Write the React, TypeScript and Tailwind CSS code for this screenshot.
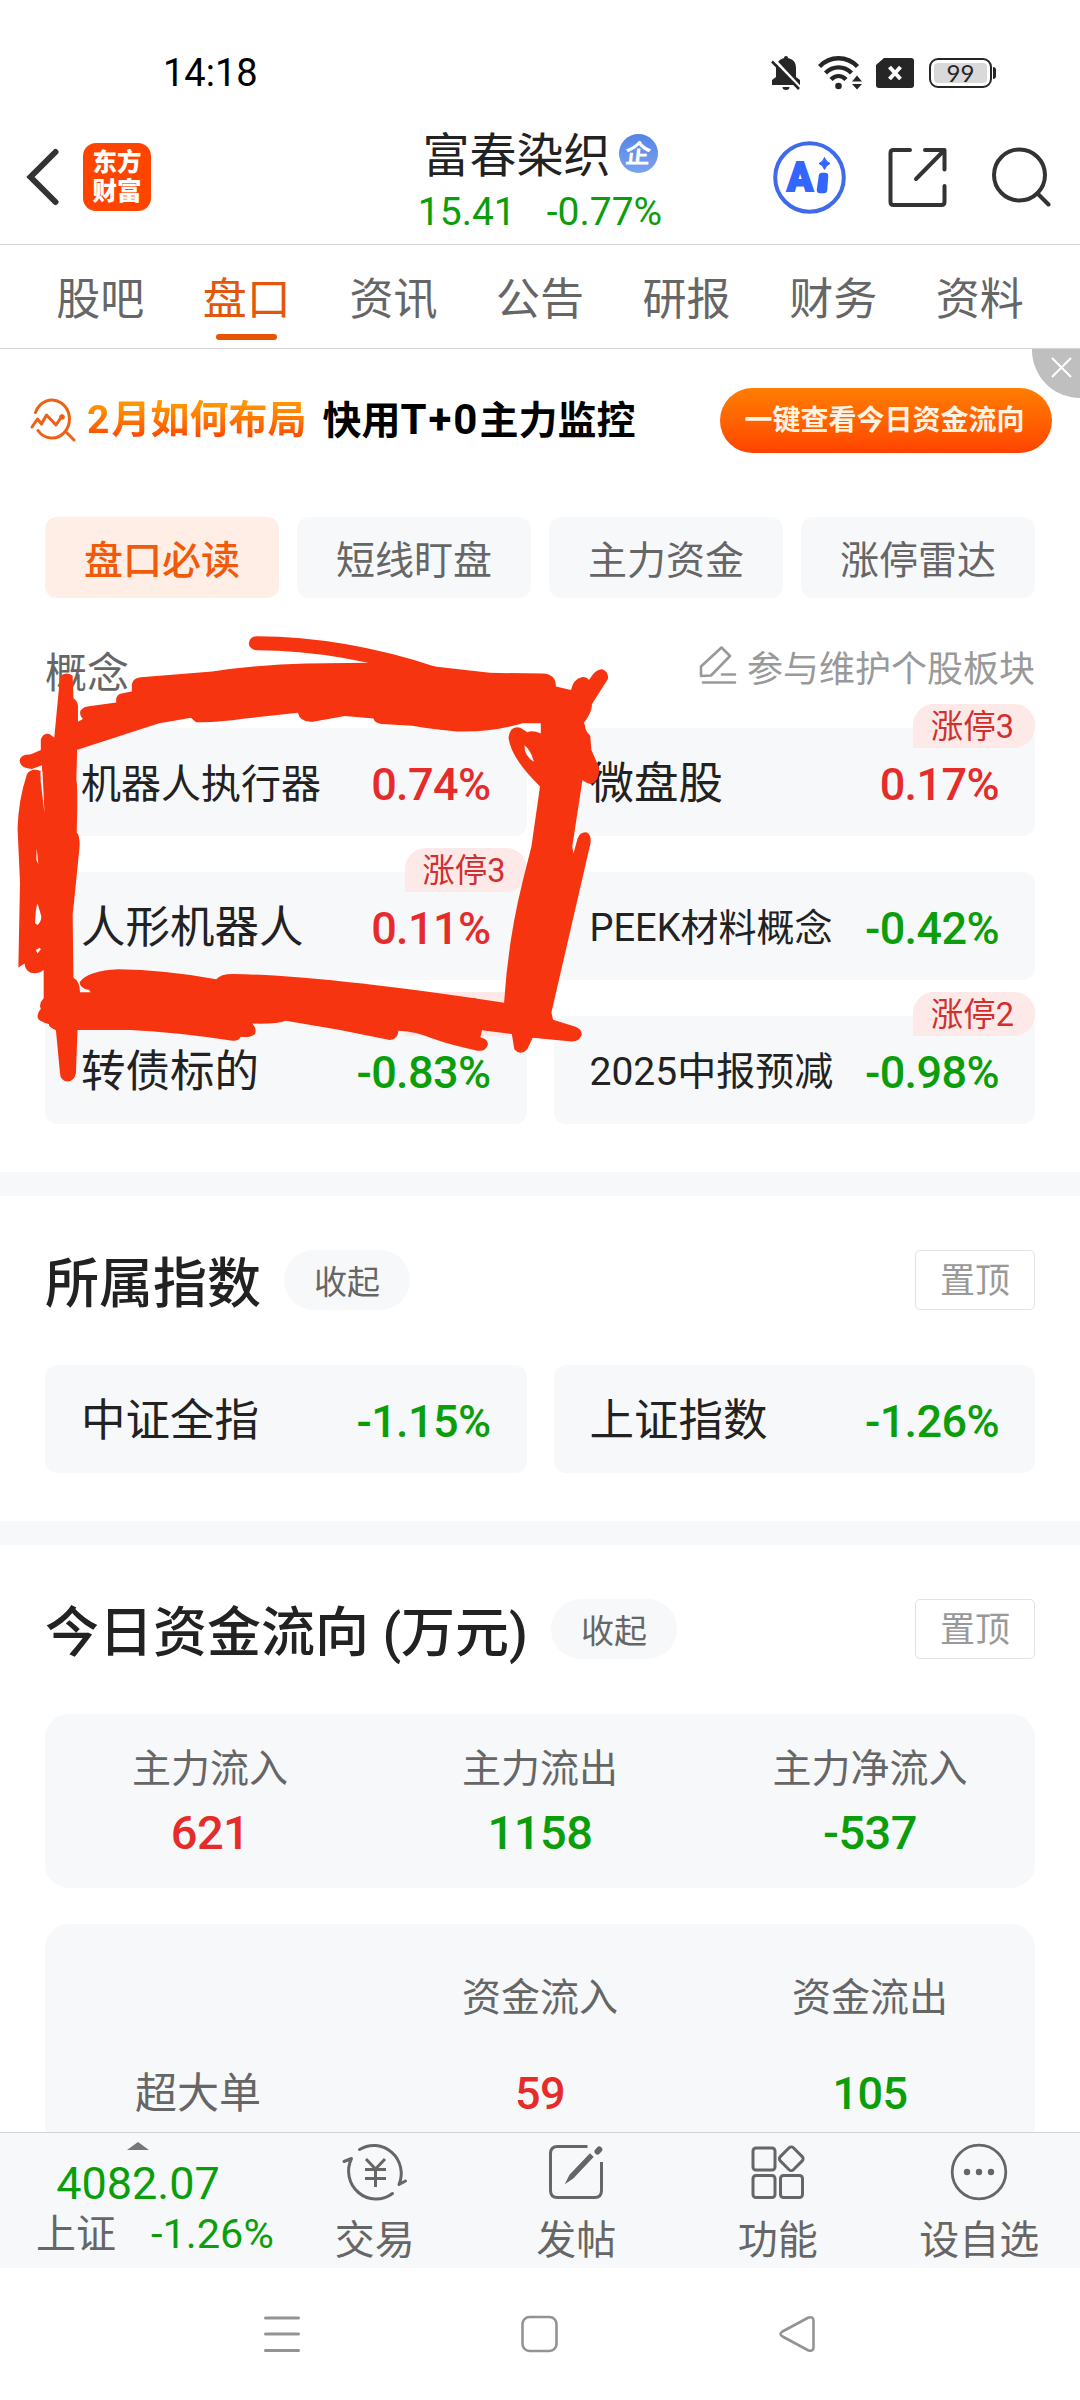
import React from 'react';
import clsx from 'clsx';

type Quote = { name: string; value: string; badge?: string; size?: string };

const UP = 'text-[#e62b2b]';
const DOWN = 'text-[#0a9e0a]';

const NAV_TABS = ['股吧', '盘口', '资讯', '公告', '研报', '财务', '资料'];
const SUB_TABS = ['盘口必读', '短线盯盘', '主力资金', '涨停雷达'];

const CONCEPTS: Quote[] = [
  { name: '机器人执行器', value: '0.74%', size: 'text-[40px]' },
  { name: '微盘股', value: '0.17%', badge: '涨停3' },
  { name: '人形机器人', value: '0.11%', badge: '涨停3' },
  { name: 'PEEK材料概念', value: '-0.42%', size: 'text-[38px]' },
  { name: '转债标的', value: '-0.83%', badge: '涨停1' },
  { name: '2025中报预减', value: '-0.98%', badge: '涨停2', size: 'text-[39px]' },
];

const INDEXES: Quote[] = [
  { name: '中证全指', value: '-1.15%' },
  { name: '上证指数', value: '-1.26%' },
];

const FLOWS = [
  { label: '主力流入', value: '621', color: UP },
  { label: '主力流出', value: '1158', color: DOWN },
  { label: '主力净流入', value: '-537', color: DOWN },
];

// --- STATUS BAR ---
const StatusBar = () => (
  <div className="flex h-[110px] shrink-0 items-center justify-between pt-[35px] pr-[84px] pl-[163px]">
    <span className="text-[38px] leading-none text-black">14:18</span>
    <div className="flex items-center text-[#262626]">
      <svg width="30" height="34" viewBox="0 0 30 34" fill="currentColor">
        <path d="M13 2a2 2 0 0 1 4 0c6 1.500 8 5 8 10v9l4 3v5H1v-5l4-3v-9c0-5 3-8.500 8-10z" />
        <path d="M11.500 31h7a3.500 3 0 0 1-7 0z" />
        <path d="M3 3.500l27 29" stroke="#fff" strokeWidth="3" />
        <path d="M1 5.500l27 27.500" stroke="currentColor" strokeWidth="2.600" />
      </svg>
      <svg className="ml-[17px]" width="45" height="34" viewBox="0 0 45 34" fill="none" stroke="currentColor" strokeWidth="4.400">
        <path d="M1.500 10.500C12-.5 29-.5 39.500 10.500M7.500 17c7.500-7.500 18.500-7.500 26 0M13 23.500c4.500-4.500 10.500-4.500 15 0" />
        <circle cx="20.500" cy="30" r="3.300" fill="currentColor" stroke="none" />
        <path d="M34 25.500l5-6 5 6zM34 28l5 5.500 5-5.500z" fill="currentColor" stroke="none" />
      </svg>
      <svg className="ml-[13px]" width="38" height="30" viewBox="0 0 38 30">
        <path d="M8 0h27a3 3 0 0 1 3 3v24a3 3 0 0 1-3 3H3a3 3 0 0 1-3-3V7z" fill="currentColor" />
        <path d="M13.500 9l11 12M24.500 9l-11 12" stroke="#fff" strokeWidth="4" />
      </svg>
      <div className="ml-[15px] flex h-[30px] w-[63px] items-center rounded-[9px] border-2 border-[#262626] p-[3px]">
        <div className="flex h-full w-full items-center justify-center rounded-[4px] bg-[#d9d9d9] font-['Lato'] text-[24px] leading-none text-[#262626]">
          99
        </div>
      </div>
      <div className="ml-[1px] h-[12px] w-[3px] rounded-r bg-[#262626]" />
    </div>
  </div>
);

// --- HEADER ---
const Header = () => (
  <header className="grid h-[135px] shrink-0 grid-cols-3 border-b border-[#d5d5d5]">
    <div className="flex items-center pl-[25px]">
      <svg width="35" height="58" viewBox="0 0 35 58" fill="none" stroke="#333" strokeWidth="6" strokeLinecap="round">
        <path d="M30.500 4L5.500 29l25 25" />
      </svg>
      <div className="ml-[23px] flex h-[68px] w-[68px] flex-col items-center justify-center rounded-[13px] bg-[#ff4400] text-[24.5px] leading-[29px] font-black text-white">
        <span>东方</span>
        <span>财富</span>
      </div>
    </div>
    <div className="flex flex-col items-center justify-center pt-[13px]">
      <div className="flex items-center leading-[56px]">
        <span className="text-[47px] text-[#222]">富春染织</span>
        <span className="-mt-1 ml-[8px] flex h-[39px] w-[39px] items-center justify-center rounded-full bg-gradient-to-b from-[#5484e6] to-[#7ba3ec] text-[26px] leading-none font-bold text-white">
          <span className="-skew-x-6">企</span>
        </span>
      </div>
      <div className={clsx('flex gap-[31px] text-[39px] leading-[56px]', DOWN)}>
        <span>15.41</span>
        <span>-0.77%</span>
      </div>
    </div>
    <div className="flex items-center justify-end pr-[29px]">
      <svg width="73" height="73" viewBox="0 0 73 73">
        <circle cx="36.500" cy="36.500" r="34.300" fill="none" stroke="#3f6bea" strokeWidth="4" />
        <g fill="#3366ff" stroke="#3366ff">
          <text x="14" y="50" fontSize="40" fontWeight="900" strokeWidth="2" fontFamily="Roboto" textLength="26" lengthAdjust="spacingAndGlyphs">A</text>
          <path d="M49 35h3l-1 14h-4z" strokeWidth="6.500" strokeLinejoin="round" />
          <path d="M51.500 16.500q1.500 4.500 5.500 6-4 1.500-5.500 6-1.500-4.500-5.500-6 4-1.500 5.500-6z" strokeWidth="1" />
        </g>
      </svg>
      <svg className="ml-[42px]" width="59" height="60" viewBox="0 0 59 60" fill="none" stroke="#333" strokeWidth="4" strokeLinecap="round" strokeLinejoin="round">
        <path d="M22 3H5.500Q2.500 3 2.500 6v49q0 3 3 3h48q3 0 3-3V39" />
        <path d="M37 3h19.500v19.500M56 3.500L28 32" />
      </svg>
      <svg className="ml-[44px]" width="60" height="62" viewBox="0 0 60 62" fill="none" stroke="#333" strokeWidth="4" strokeLinecap="round">
        <circle cx="28.500" cy="29" r="25.500" />
        <path d="M46.500 47.500L57.500 58.500" />
      </svg>
    </div>
  </header>
);

const NavTabs = () => (
  <nav className="flex h-[104px] shrink-0 border-b border-[#d5d5d5] px-[27px] pt-[26px]">
    {NAV_TABS.map((tab) => {
      const active = tab === '盘口';
      return (
        <div key={tab} className="flex flex-1 flex-col items-center">
          <span className={clsx('text-[44px] leading-[58px]', active ? 'text-[#e2570c]' : 'text-[#666]')}>{tab}</span>
          {active && <span className="mt-[5px] h-[6px] w-[61px] rounded-full bg-[#e85500]" />}
        </div>
      );
    })}
  </nav>
);

// --- PROMO BANNER ---
const Banner = () => (
  <div className="relative flex h-[142px] items-center pr-[28px] pl-[30px]">
    <svg width="46" height="44" viewBox="0 0 46 44" fill="none" stroke="#ef6014" strokeWidth="3" strokeLinecap="round">
      <path d="M5.500 14.500A17.500 19 0 1 1 8 32.500M36 34l8 8" />
      <path d="M2 29l5.500-8 4 5 5-9 9.500 10 6-9" strokeLinejoin="round" />
      <circle cx="32" cy="19" r="1.300" />
    </svg>
    <span className="ml-[11px] bg-gradient-to-b from-[#ff9500] from-20% to-[#ff4d00] to-80% bg-clip-text text-[39px] leading-[50px] font-bold text-transparent">
      <span className="mr-[2px]">2</span>月如何布局
    </span>
    <span className="ml-[16px] text-[39px] leading-[50px] font-bold text-black">
      快用<span className="tracking-[2px] text-[42px]">T+0</span>主力监控
    </span>
    <div className="ml-auto flex h-[65px] w-[332px] items-center justify-center rounded-full bg-gradient-to-b from-[#ff7d00] to-[#ff4200] pt-[2px] pr-[3px] text-[28px] font-bold text-[#fff3e4]">
      一键查看今日资金流向
    </div>
    <div className="absolute top-0 right-0 flex h-[49px] w-[48px] items-start justify-end rounded-bl-full bg-[#bfbfbf] pt-[8px] pr-[8px]">
      <svg width="21" height="21" viewBox="0 0 21 21" stroke="#fff" strokeWidth="2">
        <path d="M1 1l19 19M20 1L1 20" />
      </svg>
    </div>
  </div>
);

const QuoteCard = ({ quote }: { quote: Quote }) => (
  <div className="relative flex h-[108px] items-center justify-between rounded-xl bg-[#f7f8fa] pt-[5px] pr-[36px] pl-[36px]">
    <span className={clsx('whitespace-nowrap text-[#222]', quote.size ?? 'text-[44.5px]')}>{quote.name}</span>
    <span className={clsx('text-[45px] font-medium tracking-[-0.6px]', quote.value.startsWith('-') ? DOWN : UP)}>{quote.value}</span>
    {quote.badge && (
      <span className="absolute -top-[24px] right-0 flex h-[44px] w-[122px] items-center justify-center rounded-[21px] rounded-bl-none bg-[#fde9e8] pt-[3px] pr-[3px] text-[32.5px] text-[#cf3030]">
        {quote.badge}
      </span>
    )}
  </div>
);

const QuoteGrid = ({ quotes }: { quotes: Quote[] }) => (
  <div className="grid grid-cols-2 gap-x-[27px] gap-y-[36px]">
    {quotes.map((q) => (
      <QuoteCard key={q.name} quote={q} />
    ))}
  </div>
);

const SectionHead = ({ title }: { title: string }) => (
  <div className="mb-[55px] flex h-[60px] items-center">
    <h2 className="pt-[9px] text-[54px] leading-[60px] font-medium text-[#222]">{title}</h2>
    <span className="ml-[23px] flex h-[60px] w-[126px] items-center justify-center rounded-full bg-[#f7f8fa] pt-[5px] text-[33px] text-[#666]">收起</span>
    <span className="ml-auto flex h-[60px] w-[120px] items-center justify-center rounded-[5px] border border-[#e2e2e2] pt-[5px] text-[35px] text-[#999]">置顶</span>
  </div>
);

const Divider = () => <div className="h-[24px] bg-[#f7f8fa]" />;

// Hand-drawn marker loop over the first concept rows
const MarkerLoop = () => (
  <svg
    className="pointer-events-none absolute top-[600px] left-0"
    width="640"
    height="560"
    viewBox="0 0 1568 1568"
    preserveAspectRatio="none"
    fill="#f73410"
    fillRule="evenodd"
  >
    <path d="M629 121Q840 122 1060 205" fill="none" stroke="#f73410" strokeWidth="39" strokeLinecap="round" />
    <path d="M180 348L203 333Q194 325 197 310Q205 298 222 297L285 287Q282 264 300 261L323 256V235Q326 218 345 216L520 200Q640 180 750 178L905 176L1065 186L1200 204L1330 206Q1362 208 1362 242L1399 252Q1404 222 1425 216Q1438 215 1443 224Q1460 192 1475 194Q1493 202 1489 222L1450 292Q1452 312 1430 345H1280Q1200 372 1120 368Q1060 362 1010 352L935 347Q918 345 915 332L845 325L770 340Q735 345 730 316L600 332Q520 345 480 342L468 330Q430 338 390 345L180 423Z" />
    <path d="M1325 330H1425L1433 350Q1434 368 1446 380L1449 420L1468 470Q1468 512 1447 515Q1438 514 1427 505L1402 690L1405 710L1415 668Q1422 648 1438 651Q1449 658 1447 680L1351 1155L1305 1226L1238 1200L1235 1128Q1245 950 1280 790L1302 690L1323 522Q1250 440 1246 385Q1250 350 1275 358L1292 370Q1305 363 1325 374ZM1285 407Q1284 435 1308 453Q1300 420 1285 407Z" />
    <path d="M130 1098H222L218 1092Q196 1088 195 1070Q215 1038 290 1034Q400 1035 530 1062Q540 1047 570 1047Q800 1052 1235 1128L1300 1130L1351 1155L1355 1175L1410 1195Q1427 1203 1425 1218Q1418 1238 1400 1236L1305 1226L1292 1258Q1275 1278 1260 1258L1254 1215L1181 1205L1177 1224Q1197 1230 1195 1245Q1190 1265 1170 1262Q1100 1245 1060 1228Q1020 1208 976 1206Q975 1230 955 1232L830 1203L700 1178Q680 1188 618 1186Q630 1200 625 1215Q615 1226 590 1223Q585 1235 570 1234Q430 1210 320 1204H180L130 1195Z" />
    <path d="M147 215Q160 198 178 212L180 275Q192 285 191 300V340L187 505Q191 515 188 650Q196 660 195 690L181 850L178 880L180 1058Q196 1068 196 1098V1204H190L186 1325Q182 1348 165 1348Q148 1346 147 1325L137 1205Q118 1195 120 1188Q92 1178 92 1168Q92 1155 100 1145Q94 1130 107 1115V1035Q95 1048 75 1044Q62 1038 60 1018L45 1029L49 790L43 640Q45 560 66 488Q74 472 92 476L103 480V463L78 473Q50 472 48 450Q50 432 76 432L100 420V390Q108 370 122 376L133 386ZM99 480L104 478L109 597L100 510ZM90 695L94 740L89 728ZM92 850Q87 862 86 905L92 910Q102 900 101 885ZM88 980L97 974L100 978L92 990Z" />
  </svg>
);

// --- BOTTOM BAR ---
const TradeIcon = () => (
  <svg width="66" height="60" viewBox="0 0 66 60" fill="none" stroke="#666" strokeWidth="3" strokeLinecap="round" strokeLinejoin="round">
    <path d="M17.500 7.500A27.500 28 0 0 1 57 42.500l6.500-3.500" />
    <path d="M50.500 51.500A27.500 28 0 0 1 9.500 16.500L2 19.500" />
    <path d="M24 17l9.500 10L43 17M23 27.500h21M23 36.500h21M33.500 27v18" strokeLinecap="butt" />
  </svg>
);

const PostIcon = () => (
  <svg width="56" height="56" viewBox="0 0 56 56" fill="none" stroke="#666" strokeWidth="3">
    <path d="M39.500 2.500H9.500q-7 0-7 7v37q0 7 7 7h37q7 0 7-7V18" />
    <path d="M44 13L24.500 33.500l-4.500 3 2.500-5L42 11z" fill="#666" strokeWidth="2.500" />
    <path d="M49.500 7.500l1.800-2" strokeWidth="6" strokeLinecap="round" />
  </svg>
);

const GridIcon = () => (
  <svg width="54" height="56" viewBox="0 0 54 56" fill="none" stroke="#666" strokeWidth="3">
    <rect x="2" y="4" width="22" height="22" rx="3" />
    <rect x="2" y="31.500" width="22" height="22" rx="3" />
    <rect x="29.500" y="31.500" width="22" height="22" rx="3" />
    <rect x="31" y="5.500" width="18.500" height="18.500" rx="3" transform="rotate(45 40.250 14.750)" />
  </svg>
);

const MoreIcon = () => (
  <svg width="58" height="58" viewBox="0 0 58 58" fill="#666">
    <circle cx="29" cy="29" r="26.800" fill="none" stroke="#666" strokeWidth="2.800" />
    <circle cx="17" cy="29" r="3.200" />
    <circle cx="29" cy="29" r="3.200" />
    <circle cx="41" cy="29" r="3.200" />
  </svg>
);

const ACTIONS = [
  { label: '交易', icon: <TradeIcon /> },
  { label: '发帖', icon: <PostIcon /> },
  { label: '功能', icon: <GridIcon /> },
  { label: '设自选', icon: <MoreIcon /> },
];

const BottomBar = () => (
  <footer className="flex h-[136px] shrink-0 border-t border-[#d0d4d8] bg-[#f6f8fa]">
    <div className="w-[274px] shrink-0">
      <div className="flex flex-col items-center pt-[9px] pl-[2px]">
        <svg width="22" height="8" viewBox="0 0 22 8" fill="#777">
          <path d="M0 8L11 0l11 8z" />
        </svg>
        <span className={clsx('mt-[10px] text-[45px] leading-[48px]', DOWN)}>4082.07</span>
      </div>
      <div className="flex items-center pl-[36px] leading-[50px] whitespace-nowrap">
        <span className="pt-[2px] text-[40px] text-[#666]">上证</span>
        <span className={clsx('ml-[35px] text-[41.5px]', DOWN)}>-1.26%</span>
      </div>
    </div>
    {ACTIONS.map((a) => (
      <div key={a.label} className="flex flex-1 flex-col items-center pt-[9px]">
        <div className="flex h-[60px] items-center">{a.icon}</div>
        <span className="mt-[15px] text-[40px] leading-[48px] text-[#666]">{a.label}</span>
      </div>
    ))}
  </footer>
);

const SystemNav = () => (
  <div className="flex h-[132px] shrink-0 items-center justify-center gap-[221px] pr-[2px]">
    <svg width="36" height="38" viewBox="0 0 36 38" stroke="#939393" strokeWidth="3" strokeLinecap="round">
      <path d="M1.500 3h33M1.500 19h33M1.500 35.500h33" />
    </svg>
    <svg width="37" height="38" viewBox="0 0 37 38" fill="none" stroke="#939393" strokeWidth="2.600">
      <rect x="1.500" y="2" width="34" height="34" rx="7" />
    </svg>
    <svg width="36" height="38" viewBox="0 0 36 38" fill="none" stroke="#939393" strokeWidth="2.600">
      <path d="M3.500 16.500L29 2.800q5.500-1.800 5.500 3v26.400q0 4.800-5.500 3L3.500 21.500q-4-2.500 0-5z" />
    </svg>
  </div>
);

export default function App() {
  return (
    <div className="relative flex h-[2400px] w-[1080px] flex-col overflow-hidden bg-white font-[Roboto,'Noto_Sans_CJK_SC',sans-serif]">
      <StatusBar />
      <Header />
      <NavTabs />
      <main className="flex-1 overflow-hidden">
        <Banner />
        <section className="px-[45px] pt-[26px] pb-[48px]">
          <div className="grid grid-cols-4 gap-[18px]">
            {SUB_TABS.map((tab, idx) => (
              <div
                key={tab}
                className={clsx(
                  'flex h-[81px] items-center justify-center rounded-xl pt-[7px] text-[39px]',
                  idx === 0 ? 'bg-[#ffeee6] font-medium text-[#f05a0a]' : 'bg-[#f7f8fa] text-[#666]'
                )}
              >
                {tab}
              </div>
            ))}
          </div>
          <div className="mt-[36px] mb-[22px] flex h-[72px] items-center justify-between">
            <span className="pt-[6px] text-[42px] text-[#666]">概念</span>
            <div className="flex items-center text-[#999]">
              <svg className="-mt-[10px]" width="38" height="40" viewBox="0 0 38 40" fill="none" stroke="currentColor" strokeWidth="2.600" strokeLinejoin="round" strokeLinecap="round">
                <path d="M2 31V21.500L22.500 2.500l8.500 8.500L12 30.500z" />
                <path d="M23 29.500h13M4 37.500h32" />
              </svg>
              <span className="ml-[10px] text-[36px]">参与维护个股板块</span>
            </div>
          </div>
          <QuoteGrid quotes={CONCEPTS} />
        </section>
        <Divider />
        <section className="px-[45px] pt-[54px] pb-[48px]">
          <SectionHead title="所属指数" />
          <QuoteGrid quotes={INDEXES} />
        </section>
        <Divider />
        <section className="px-[45px] pt-[54px]">
          <SectionHead title="今日资金流向 (万元)" />
          <div className="grid h-[174px] grid-cols-3 rounded-3xl bg-[#f7f8fa] pt-[28px] text-center">
            {FLOWS.map((f) => (
              <div key={f.label}>
                <div className="text-[39px] leading-[54px] text-[#666]">{f.label}</div>
                <div className={clsx('mt-[8px] text-[47px] leading-[58px] font-medium tracking-[-0.5px]', f.color)}>{f.value}</div>
              </div>
            ))}
          </div>
          <div className="mt-[36px] grid h-[260px] auto-rows-max grid-cols-3 gap-y-[36px] rounded-t-3xl bg-[#f7f8fa] pt-[44px] text-center text-[39px] leading-[60px] text-[#666]">
            <span />
            <span>资金流入</span>
            <span>资金流出</span>
            <span className="pr-[24px] text-[42px]">超大单</span>
            <span className={clsx('text-[45px] font-medium tracking-[-0.6px]', UP)}>59</span>
            <span className={clsx('text-[45px] font-medium tracking-[-0.6px]', DOWN)}>105</span>
          </div>
        </section>
      </main>
      <BottomBar />
      <SystemNav />
      <MarkerLoop />
    </div>
  );
}
